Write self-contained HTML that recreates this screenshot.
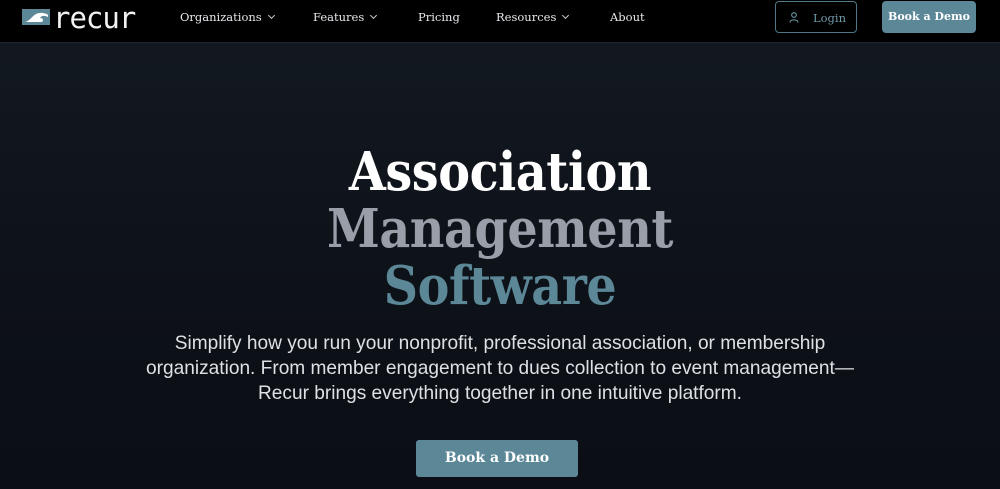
<!DOCTYPE html>
<html><head><meta charset="utf-8"><style>
*{margin:0;padding:0;box-sizing:border-box}
body{width:1000px;height:489px;overflow:hidden;background:linear-gradient(180deg,#141a22 0%,#0d1118 60%,#0b0e14 100%);font-family:"Liberation Sans",sans-serif;color:#fff;position:relative}
.hdr{position:absolute;left:0;top:0;width:1000px;height:43px;background:#000;border-bottom:1px solid #1c2530}
.logo{position:absolute;left:22px;top:9px;width:28px;height:16px;background:#5b8797}
.logotxt{position:absolute;left:53px;top:1px;font-family:"DejaVu Sans Mono","Liberation Mono",monospace;font-size:29px;color:#f2f2f2;letter-spacing:-1px}
.nav{position:absolute;top:10px;font-family:"DejaVu Serif",serif;font-size:11.5px;color:#e6e8ec}
.chev{display:inline-block;width:5px;height:5px;border-right:1.3px solid #ccc;border-bottom:1.3px solid #ccc;transform:rotate(45deg);margin-left:7px;position:relative;top:-3px}
.login{position:absolute;left:775px;top:1px;width:82px;height:32px;border:1px solid #4f7785;border-radius:4px;color:#6f9aaa;font-family:"DejaVu Serif",serif;font-size:11.5px;padding:9px 0 0 37px}
.bdemo{position:absolute;left:882px;top:1px;width:94px;height:32px;background:#5b8797;border-radius:4px;color:#fff;font-family:"DejaVu Serif",serif;font-weight:bold;font-size:11px;text-align:center;line-height:32px}
h1{position:absolute;left:0;top:144px;width:1000px;text-align:center;font-family:"DejaVu Serif",serif;font-weight:bold;font-size:53px;line-height:57px;transform:scaleX(0.9);letter-spacing:-0.5px}
p{position:absolute;left:100px;top:331px;width:800px;text-align:center;font-size:19.1px;line-height:25px;color:#dde1e6;white-space:nowrap}
.cta{position:absolute;left:416px;top:440px;width:162px;height:37px;background:#5b8797;border-radius:3px;font-family:"DejaVu Serif",serif;font-weight:bold;font-size:14px;text-align:center;line-height:37px;color:#fff}
</style></head><body>
<div class="hdr">
<div class="logo"><svg width="28" height="16"><path d="M3 13 C8 12 10 7 14 5 C18 3 24 4 26 6 L26 8 C22 6 19 7 18 9 C21 9 22 11 20 13 Z" fill="#fff"/></svg></div>
<div class="logotxt">recur</div>
<div class="nav" style="left:180px">Organizations<span class="chev"></span></div>
<div class="nav" style="left:313px">Features<span class="chev"></span></div>
<div class="nav" style="left:418px">Pricing</div>
<div class="nav" style="left:496px">Resources<span class="chev"></span></div>
<div class="nav" style="left:610px">About</div>
<div class="login"><svg style="position:absolute;left:13px;top:10px" width="10" height="11"><circle cx="5" cy="3" r="2.3" fill="none" stroke="#6f9aaa" stroke-width="1.1"/><path d="M1 10.5 C1 7 9 7 9 10.5" fill="none" stroke="#6f9aaa" stroke-width="1.1"/></svg>Login</div>
<div class="bdemo">Book a Demo</div>
</div>
<h1><span style="color:#fff">Association</span><br><span style="color:#9a9ea9">Management</span><br><span style="color:#5b8797">Software</span></h1>
<p>Simplify how you run your nonprofit, professional association, or membership<br>organization. From member engagement to dues collection to event management—<br>Recur brings everything together in one intuitive platform.</p>
<div class="cta">Book a Demo</div>
</body></html>
